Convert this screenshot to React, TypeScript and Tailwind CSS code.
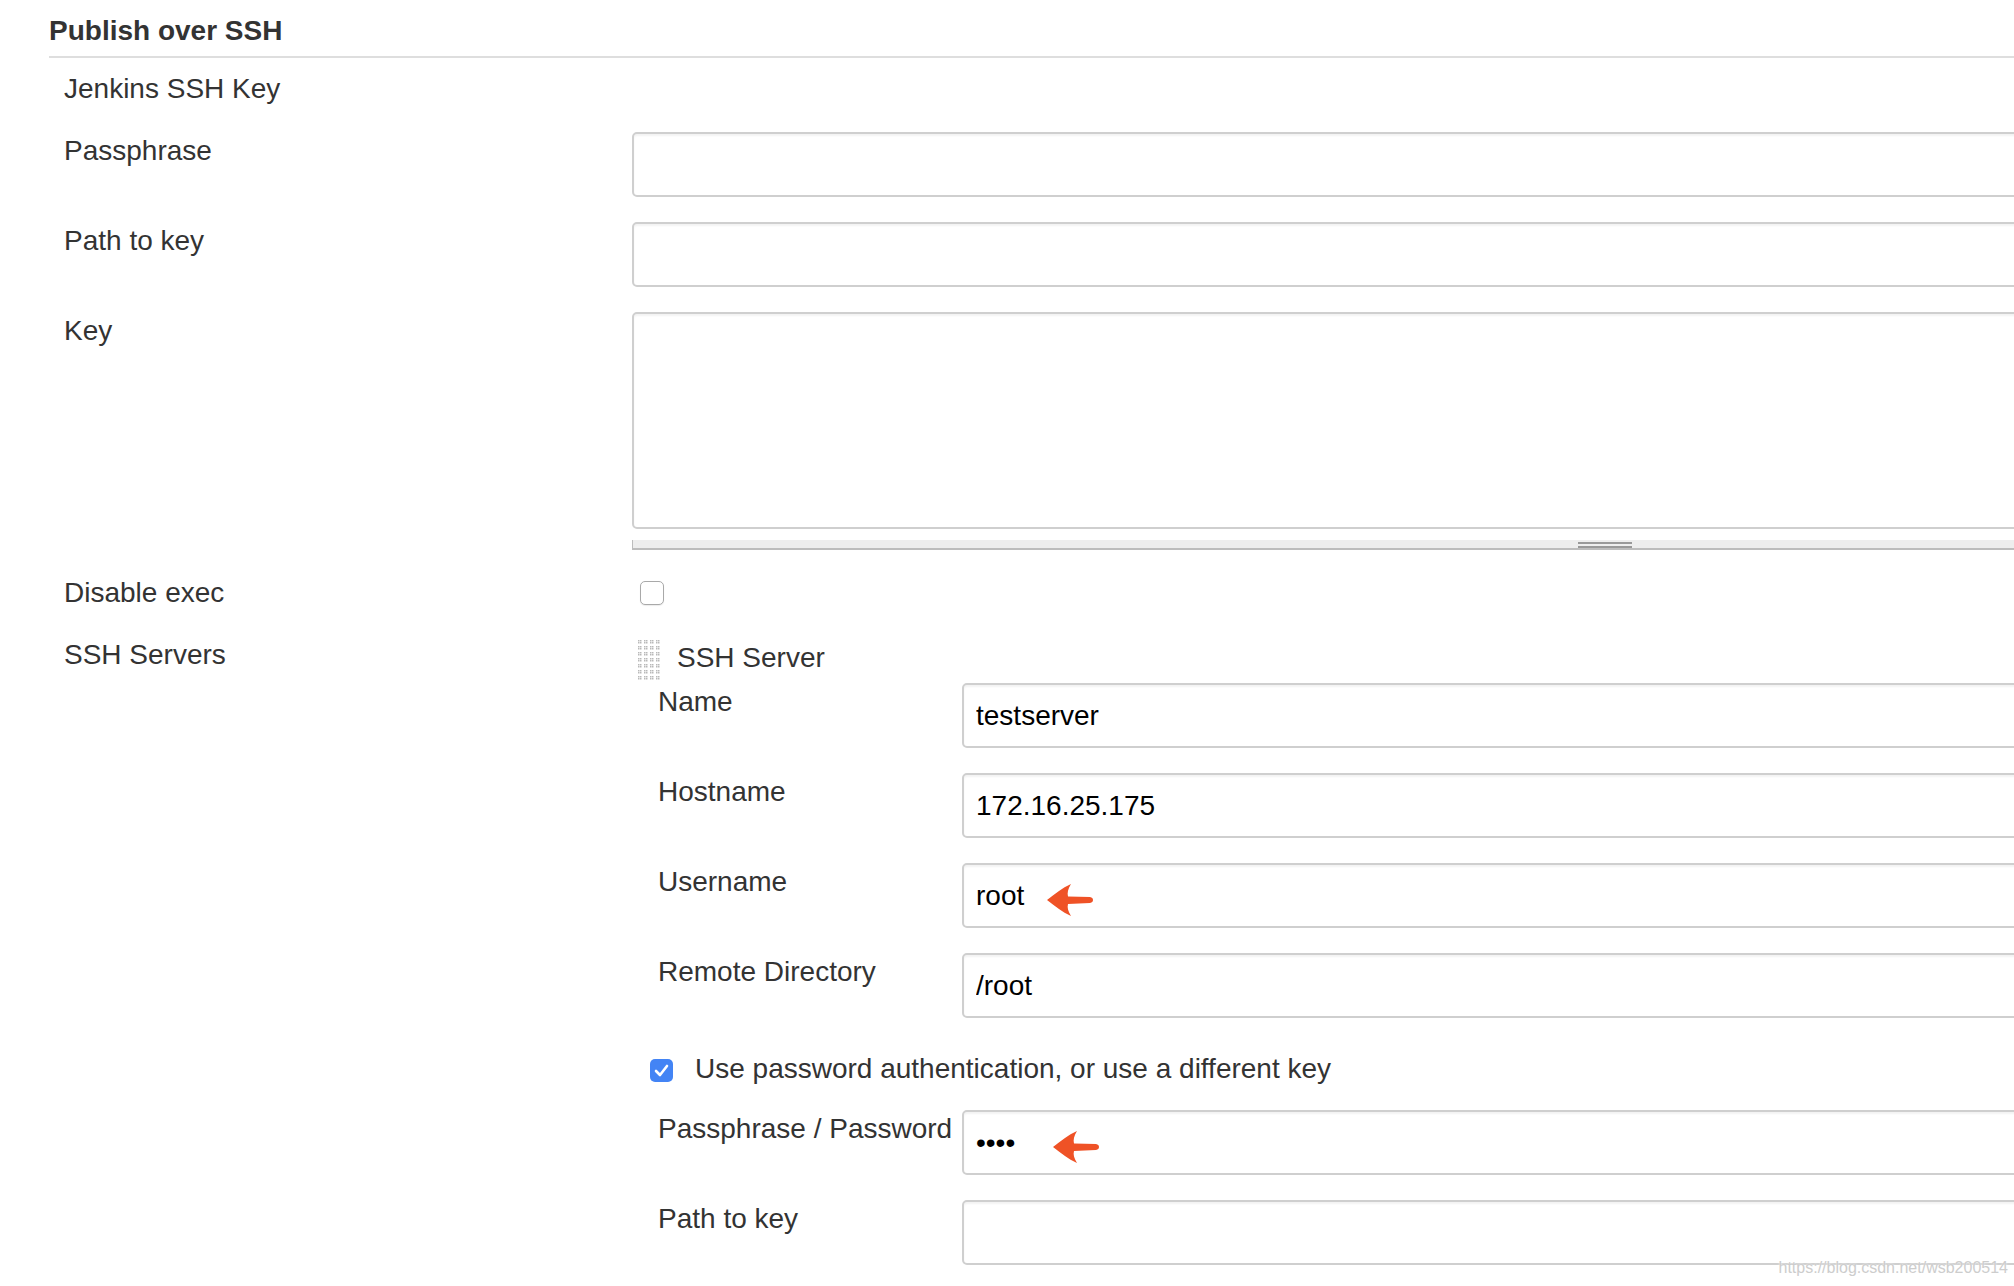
import React from "react";

const inputCls =
  "block w-full h-[65px] border-2 border-[#cfcfcf] rounded-[5px] bg-white pl-[12px] text-[28px] text-black outline-none shadow-[inset_0_2px_2px_rgba(0,0,0,0.05)] font-['Liberation_Sans',Arial,sans-serif]";

function Arrow({ className }: { className: string }) {
  return (
    <svg className={className} width="47" height="32" viewBox="0 0 47 32">
      <path
        d="M0 16 C8 10 15 4 24 0 C21 5 20 9 21 12.5 L43 13 C47 13.6 47 18.4 43 19 L21 20 C20 23.5 21 27 24 32 C15 28 8 22 0 16 Z"
        fill="#ef5226"
      />
    </svg>
  );
}

function Grip() {
  const rects: React.ReactNode[] = [];
  for (let r = 0; r < 7; r++) {
    for (let c = 0; c < 4; c++) {
      for (let dy = 0; dy < 2; dy++) {
        for (let dx = 0; dx < 2; dx++) {
          rects.push(
            <rect
              key={`${r}-${c}-${dx}-${dy}`}
              x={c * 6 + dx * 2}
              y={r * 6 + dy * 2}
              width="1.5"
              height="1.5"
              fill="#b9b9b9"
            />
          );
        }
      }
    }
  }
  return (
    <svg width="23" height="42" viewBox="0 0 23 42">
      {rects}
    </svg>
  );
}

function Row({
  label,
  children,
  labelW,
  labelPl,
  className = "",
}: {
  label: string;
  children: React.ReactNode;
  labelW: string;
  labelPl?: string;
  className?: string;
}) {
  return (
    <div className={`flex items-start ${className}`}>
      <div className={`${labelW} ${labelPl ?? ""} shrink-0 pt-[2px] leading-[34px] text-[28px] text-[#333333]`}>
        {label}
      </div>
      <div className="flex-1 min-w-0">{children}</div>
    </div>
  );
}

export default function App() {
  return (
    <div className="relative w-[2014px] h-[1286px] overflow-hidden bg-white font-['Liberation_Sans',Arial,sans-serif] text-[#333333]">
      <div className="w-[2120px]">
        <div className="pl-[49px] pt-[14px]">
          <h2 className="text-[28px] leading-[34px] font-bold text-[#333333]">Publish over SSH</h2>
          <div className="mt-[8px] h-[2px] bg-[#dedede]" />
        </div>

        <div className="pl-[64px]">
          <div className="mt-[14px] text-[28px] leading-[34px]">Jenkins SSH Key</div>

          <Row label="Passphrase" labelW="w-[568px]" className="mt-[26px]">
            <input className={inputCls} readOnly defaultValue="" />
          </Row>

          <Row label="Path to key" labelW="w-[568px]" className="mt-[25px]">
            <input className={inputCls} readOnly defaultValue="" />
          </Row>

          <Row label="Key" labelW="w-[568px]" className="mt-[25px]">
            <textarea
              className="block w-full h-[217px] resize-none border-2 border-[#cfcfcf] rounded-[5px] bg-white outline-none shadow-[inset_0_2px_2px_rgba(0,0,0,0.05)]"
              readOnly
              defaultValue=""
            />
            <div className="mt-[11px] h-[10px] bg-[#eeeeee] border-b-2 border-l border-[#bdbdbd] flex items-start">
              <div className="ml-[945px] mt-[2px] w-[54px] h-[6px] border-t-2 border-b-2 border-[#999999]" />
            </div>
          </Row>

          <Row label="Disable exec" labelW="w-[568px]" className="mt-[24px]">
            <div className="ml-[8px] mt-[7px] w-[24px] h-[24px] rounded-[5px] border-[1.5px] border-[#a9a9a9] bg-white shadow-[0_1px_1px_rgba(0,0,0,0.08)]" />
          </Row>

          <Row label="SSH Servers" labelW="w-[568px]" className="mt-[26px]">
            <div className="flex items-start h-[47px]">
              <div className="ml-[6px] mt-[4px]">
                <Grip />
              </div>
              <div className="ml-[16px] mt-[5px] text-[28px] leading-[34px]">SSH Server</div>
            </div>

            <Row label="Name" labelW="w-[330px]" labelPl="pl-[26px]">
              <input className={inputCls} readOnly defaultValue="testserver" />
            </Row>
            <Row label="Hostname" labelW="w-[330px]" labelPl="pl-[26px]" className="mt-[25px]">
              <input className={inputCls} readOnly defaultValue="172.16.25.175" />
            </Row>
            <Row label="Username" labelW="w-[330px]" labelPl="pl-[26px]" className="mt-[25px]">
              <div className="relative">
                <input className={inputCls} readOnly defaultValue="root" />
                <Arrow className="absolute left-[85px] top-[21px]" />
              </div>
            </Row>
            <Row label="Remote Directory" labelW="w-[330px]" labelPl="pl-[26px]" className="mt-[25px]">
              <input className={inputCls} readOnly defaultValue="/root" />
            </Row>

            <div className="mt-[34px] flex items-start pl-[18px]">
              <div className="mt-[7px] w-[23px] h-[23px] rounded-[5px] bg-[#4384f5] flex items-center justify-center">
                <svg width="15" height="13" viewBox="0 0 15 13">
                  <path d="M2 7 L6 11 L13 2" stroke="white" strokeWidth="2.6" fill="none" strokeLinecap="round" strokeLinejoin="round" />
                </svg>
              </div>
              <div className="ml-[22px] text-[28px] leading-[34px]">
                Use password authentication, or use a different key
              </div>
            </div>

            <Row label="Passphrase / Password" labelW="w-[330px]" labelPl="pl-[26px]" className="mt-[24px]">
              <div className="relative">
                <input className={inputCls} readOnly type="password" defaultValue="root" />
                <Arrow className="absolute left-[91px] top-[21px]" />
              </div>
            </Row>
            <Row label="Path to key" labelW="w-[330px]" labelPl="pl-[26px]" className="mt-[25px]">
              <input className={inputCls} readOnly defaultValue="" />
            </Row>
          </Row>
        </div>
      </div>

      <div className="absolute right-[6px] bottom-[8px] text-[16px] leading-[20px] text-[#cdcdcd] [text-shadow:0_0_2px_white]">
        https://blog.csdn.net/wsb200514
      </div>
    </div>
  );
}
